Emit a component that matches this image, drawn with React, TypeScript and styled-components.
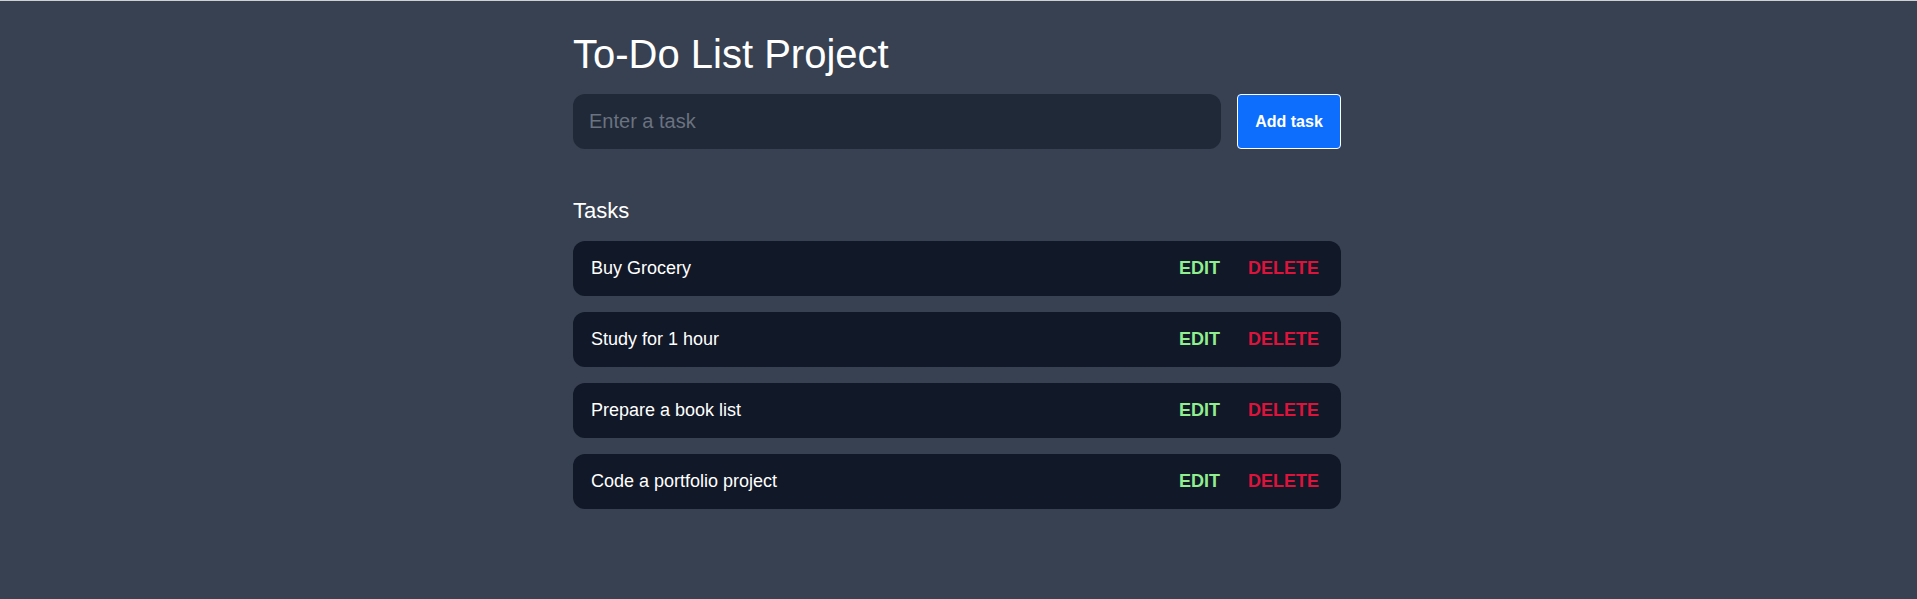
import React, { useState } from 'react';
import styled, { createGlobalStyle } from 'styled-components';

const GlobalStyle = createGlobalStyle`
  html, body {
    margin: 0;
    padding: 0;
    background: #374151;
  }
  body {
    font-family: 'Liberation Sans', Arial, sans-serif;
  }
`;

const initialTasks = ['Buy Grocery', 'Study for 1 hour', 'Prepare a book list', 'Code a portfolio project'];

export const App = () => {
  const [tasks] = useState(initialTasks);

  return (
    <Root>
      <GlobalStyle />
      <View>
        <Title>To-Do List Project</Title>

        <Form onSubmit={(e) => e.preventDefault()}>
          <TaskInput placeholder="Enter a task" />
          <AddButton type="submit">Add task</AddButton>
        </Form>

        <Heading>Tasks</Heading>

        <List>
          {tasks.map((task) => (
            <Row key={task}>
              <TaskText>{task}</TaskText>
              <Actions>
                <Action variant="edit">EDIT</Action>
                <Action variant="delete">DELETE</Action>
              </Actions>
            </Row>
          ))}
        </List>
      </View>
    </Root>
  );
};

const Root = styled.main`
  min-height: 100vh;
  box-sizing: border-box;
  border-top: 1px solid #cfd0d2;
  padding-right: 3px;
  background: #374151;
`;

const View = styled.div`
  width: 768px;
  margin: 0 auto;
  padding-top: 30px;
  display: flex;
  flex-direction: column;
`;

const Title = styled.h1`
  margin: 0 0 17px 0;
  color: #ffffff;
  font-size: 40px;
  font-weight: normal;
  line-height: 46px;
`;

const Form = styled.form`
  display: flex;
  gap: 16px;
  height: 55px;
`;

const TaskInput = styled.input`
  flex: 1;
  box-sizing: border-box;
  height: 55px;
  border: none;
  outline: none;
  border-radius: 12px;
  padding: 0 16px;
  background: #1f2937;
  color: #ffffff;
  font-family: 'Liberation Sans', Arial, sans-serif;
  font-size: 20px;

  &::placeholder {
    color: #6b7280;
  }
`;

const AddButton = styled.button`
  box-sizing: border-box;
  width: 104px;
  height: 55px;
  border: 1px solid #ffffff;
  border-radius: 4px;
  background: #0d6efd;
  color: #ffffff;
  font-family: 'Liberation Sans', Arial, sans-serif;
  font-size: 16px;
  font-weight: bold;
  cursor: pointer;
`;

const Heading = styled.h2`
  margin: 49px 0 18px 0;
  color: #ffffff;
  font-size: 22px;
  font-weight: normal;
  line-height: 25px;
`;

const List = styled.ul`
  list-style: none;
  margin: 0;
  padding: 0;
  display: flex;
  flex-direction: column;
  gap: 16px;
`;

const Row = styled.li`
  display: flex;
  align-items: center;
  justify-content: space-between;
  height: 55px;
  padding: 0 22px 0 18px;
  border-radius: 12px;
  background: #111827;
`;

const TaskText = styled.span`
  color: #ffffff;
  font-size: 18px;
`;

const Actions = styled.div`
  display: flex;
  gap: 28px;
`;

const Action = styled.button<{ variant: 'edit' | 'delete' }>`
  border: none;
  background: none;
  padding: 0;
  font-family: 'Liberation Sans', Arial, sans-serif;
  font-size: 18px;
  font-weight: bold;
  color: ${({ variant }) => (variant === 'edit' ? 'lightgreen' : 'crimson')};
  cursor: pointer;
`;

export default App;
